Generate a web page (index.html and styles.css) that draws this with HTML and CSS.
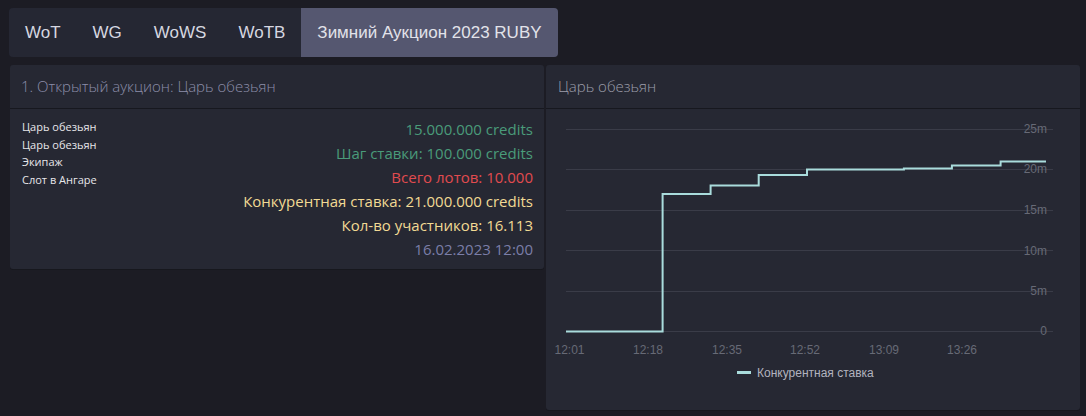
FILE: index.html
```html
<!DOCTYPE html>
<html lang="ru">
<head>
<meta charset="utf-8">
<title>Аукцион</title>
<link rel="stylesheet" href="styles.css">
</head>
<body>
<nav class="tabs">
  <a class="tab">WoT</a>
  <a class="tab">WG</a>
  <a class="tab">WoWS</a>
  <a class="tab">WoTB</a>
  <a class="tab active">Зимний Аукцион 2023 RUBY</a>
</nav>
<main class="grid">
  <section class="card">
    <header class="card-head">1. Открытый аукцион: Царь обезьян</header>
    <div class="card-body lot">
      <ul class="items">
        <li>Царь обезьян</li>
        <li>Царь обезьян</li>
        <li>Экипаж</li>
        <li>Слот в Ангаре</li>
      </ul>
      <div class="stats">
        <div class="green">15.000.000 credits</div>
        <div class="green">Шаг ставки: 100.000 credits</div>
        <div class="red">Всего лотов: 10.000</div>
        <div class="yellow">Конкурентная ставка: 21.000.000 credits</div>
        <div class="yellow">Кол-во участников: 16.113</div>
        <div class="date">16.02.2023 12:00</div>
      </div>
    </div>
  </section>
  <section class="card">
    <header class="card-head light">Царь обезьян</header>
    <div class="card-body chart">
      <svg class="plot" width="534" height="301" viewBox="0 0 534 301">
        <g class="grid-lines">
          <line x1="20" y1="20.5" x2="507" y2="20.5"/>
          <line x1="20" y1="60.5" x2="507" y2="60.5"/>
          <line x1="20" y1="101.5" x2="507" y2="101.5"/>
          <line x1="20" y1="141.5" x2="507" y2="141.5"/>
          <line x1="20" y1="182.5" x2="507" y2="182.5"/>
          <line x1="20" y1="222.5" x2="507" y2="222.5"/>
        </g>
        <g class="y-labels">
          <text x="501" y="24">25m</text>
          <text x="501" y="64">20m</text>
          <text x="501" y="105">15m</text>
          <text x="501" y="146">10m</text>
          <text x="501" y="186">5m</text>
          <text x="501" y="226">0</text>
        </g>
        <g class="x-labels">
          <text x="23.5" y="245">12:01</text>
          <text x="102" y="245">12:18</text>
          <text x="181" y="245">12:35</text>
          <text x="259" y="245">12:52</text>
          <text x="338" y="245">13:09</text>
          <text x="416" y="245">13:26</text>
        </g>
        <path class="series" d="M20 222.5 H116.6 V85 H164.6 V76.5 H212.7 V66 H261 V60.5 H357.9 V59.5 H405.9 V56.5 H454.6 V52.5 H500"/>
        <line class="legend-mark" x1="191" y1="263.5" x2="205" y2="263.5"/>
        <text class="legend-text" x="211" y="268">Конкурентная ставка</text>
      </svg>
    </div>
  </section>
</main>
</body>
</html>
```

FILE: styles.css
```css
html, body {
  margin: 0;
  background: #1c1c24;
}
body {
  padding: 8px 6px 0 9px;
  font-family: "Liberation Sans", Arial, sans-serif;
  height: 416px;
  box-sizing: border-box;
  overflow: hidden;
}
.tabs {
  display: inline-flex;
  background: #252733;
  border-radius: 4px;
  height: 49px;
  overflow: hidden;
}
.tab {
  display: flex;
  align-items: center;
  padding: 0 16px;
  font-size: 17px;
  color: #d6d7e0;
}
.active {
  background: #555770;
  color: #e2e3ea;
}
.grid {
  display: grid;
  grid-template-columns: 534px 534px;
  column-gap: 2px;
  align-items: start;
  margin: 8px 0 0 1px;
}
.card {
  background: #262833;
  border-radius: 3px;
  box-shadow: 0 1px 0 #17181e;
}
.card-head {
  height: 44px;
  box-sizing: border-box;
  padding: 11px 11px 0;
  font-family: "Open Sans", "Noto Sans", sans-serif;
  font-weight: 300;
  font-size: 15px;
  color: #8d8eaa;
  border-bottom: 1px solid #17181f;
}
.card-head.light {
  padding-left: 12px;
  color: #9d9eab;
}
.lot {
  display: flex;
  justify-content: space-between;
  padding: 8px 11px 9px 12px;
  height: 160px;
  box-sizing: border-box;
}
.items {
  list-style: none;
  margin: 1px 0 0;
  padding: 0;
  font-family: "Open Sans", "Noto Sans", sans-serif;
  font-size: 11px;
  line-height: 17.7px;
  color: #e6e6ea;
}
.stats {
  text-align: right;
  font-family: "Open Sans", "Noto Sans", sans-serif;
  font-size: 15px;
  line-height: 24px;
}
.green { color: #4a9b7a; }
.red { color: #e14b4f; }
.yellow { color: #f2da94; }
.date { color: #7b7ea8; }
.chart {
  height: 301px;
}
.plot {
  display: block;
}
.grid-lines line {
  stroke: #3a3c48;
  stroke-width: 1;
}
.y-labels text {
  text-anchor: end;
  font-size: 12px;
  fill: #676a76;
}
.x-labels text {
  text-anchor: middle;
  font-size: 12px;
  fill: #676a76;
}
.series {
  fill: none;
  stroke: #a9dcdc;
  stroke-width: 2;
}
.legend-mark {
  stroke: #a9dcdc;
  stroke-width: 3;
}
.legend-text {
  font-size: 12px;
  fill: #b2b3bf;
}
```
